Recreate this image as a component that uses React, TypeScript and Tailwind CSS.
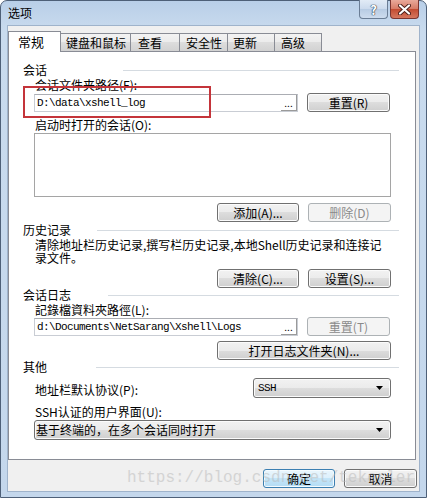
import type { ReactNode } from 'react';

const btnFace =
  'bg-[linear-gradient(#f2f2f2_0%,#ebebeb_50%,#dddddd_50%,#cfcfcf_100%)] border-[#707070] text-black shadow-[inset_0_0_0_1px_#fbfbfb]';
const btnDisabled = 'bg-[#f4f4f4] border-[#adb2b5] text-[#8a8a8a]';

function Button({
  children,
  className,
  disabled,
}: {
  children: ReactNode;
  className: string;
  disabled?: boolean;
}) {
  return (
    <div
      className={`flex h-[19px] items-center justify-center rounded-[3px] border text-[12px] leading-none ${
        disabled ? btnDisabled : btnFace
      } ${className}`}
    >
      {children}
    </div>
  );
}

function Arrow() {
  return (
    <svg width="7" height="4" viewBox="0 0 7 4">
      <path d="M0 0h7L3.5 4z" fill="#000" />
    </svg>
  );
}

function GroupHeader({ title, lineClass }: { title: string; lineClass: string }) {
  return (
    <div className="flex h-[14px] items-center">
      <span className="text-[12px] leading-none">{title}</span>
      <div className={`h-px flex-1 bg-[#d5dbe1] ${lineClass}`} />
    </div>
  );
}

function PathInput({ value }: { value: string }) {
  return (
    <div className="flex h-[18px] w-[264px] items-stretch border border-[#c9cdd4] border-t-[#abadb3] bg-white">
      <span className="flex flex-1 items-center pl-[2px] font-['Liberation_Mono',monospace] text-[11px] tracking-[-0.6px]">
        {value}
      </span>
      <span className="flex w-[16px] items-end justify-center border-r border-b border-[#9a9a9a] pb-[2px] text-[10px] leading-none">
        ...
      </span>
    </div>
  );
}

export default function App() {
  return (
    <div className="relative h-[498px] w-[427px] overflow-hidden bg-white font-['Noto_Sans_CJK_SC',sans-serif] text-black">
      <div className="flex h-full w-full flex-col rounded-t-[7px] border border-[#4e6078] bg-[linear-gradient(#b9cfe8,#c9dbee_30px,#c4d7ec)]">
        {/* Title bar */}
        <div className="flex h-[24px] items-start">
          <span className="mt-[6px] pl-[7px] text-[12px] leading-none">选项</span>
          <div className="-mt-px ml-auto mr-[7px] flex gap-[2px]">
            <div className="flex h-[19px] w-[29px] items-center justify-center rounded-b-[4px] border border-t-0 border-[#6a7d95] bg-[linear-gradient(#e2ebf6,#cbdaed_50%,#b7cbe3_50%,#cddcee)]">
              <span className="text-[13px] font-bold leading-none text-white [text-shadow:0_0_1px_#2d3b4d,0_0_1px_#2d3b4d,0_0_1px_#2d3b4d]">
                ?
              </span>
            </div>
            <div className="flex h-[19px] w-[29px] items-center justify-center rounded-b-[4px] border border-t-0 border-[#7b3530] bg-[linear-gradient(#e9a99a,#d77a65_50%,#c34a30_50%,#d5775f)]">
              <svg width="13" height="11" viewBox="0 0 13 11">
                <path d="M2 1.5l9 8M11 1.5l-9 8" stroke="#4a1d18" strokeWidth="4" strokeLinecap="round" />
                <path d="M2 1.5l9 8M11 1.5l-9 8" stroke="#fff" strokeWidth="2.2" strokeLinecap="round" />
              </svg>
            </div>
          </div>
        </div>

        {/* Client area */}
        <div className="mx-[6px] mb-[5px] flex flex-1 flex-col border border-[#9fb3cb] bg-[#f0f0f0]">
          {/* Tabs */}
          <div className="flex h-[25px] items-end text-[12px]">
            <div className="relative z-10 -mb-px flex h-[21px] w-[53px] items-center border border-b-0 border-[#898c95] bg-white pb-[2px] pl-[9px] text-[13px] leading-none">
              常规
            </div>
            <div className="-ml-px flex h-[18px] w-[71px] items-center border border-b-0 border-[#898c95] bg-[linear-gradient(#f3f3f3,#ebebeb_50%,#dddddd_50%,#d2d2d2)] pl-[5px] leading-none">
              键盘和鼠标
            </div>
            <div className="-ml-px flex h-[18px] w-[50px] items-center border border-b-0 border-[#898c95] bg-[linear-gradient(#f3f3f3,#ebebeb_50%,#dddddd_50%,#d2d2d2)] pl-[7px] leading-none">
              查看
            </div>
            <div className="-ml-px flex h-[18px] w-[49px] items-center border border-b-0 border-[#898c95] bg-[linear-gradient(#f3f3f3,#ebebeb_50%,#dddddd_50%,#d2d2d2)] pl-[6px] leading-none">
              安全性
            </div>
            <div className="-ml-px flex h-[18px] w-[48px] items-center border border-b-0 border-[#898c95] bg-[linear-gradient(#f3f3f3,#ebebeb_50%,#dddddd_50%,#d2d2d2)] pl-[5px] leading-none">
              更新
            </div>
            <div className="-ml-px flex h-[18px] w-[48px] items-center border border-b-0 border-[#898c95] bg-[linear-gradient(#f3f3f3,#ebebeb_50%,#dddddd_50%,#d2d2d2)] pl-[6px] leading-none">
              高级
            </div>
          </div>

          {/* Tab page */}
          <div className="flex h-[409px] w-[408px] flex-col border border-[#898c95] bg-white pt-[11px] pr-[16px] pl-[14px] text-[12px] leading-[12px]">
            <GroupHeader title="会话" lineClass="ml-[76px]" />
            <div className="mt-[2px] mr-[8px] ml-[11px] flex flex-col">
              <div className="h-[12px] pl-[1px]">会话文件夹路径(F):</div>
              <div className="mt-[2px] flex h-[19px] items-center gap-[9px]">
                <PathInput value={'D:\\data\\xshell_log'} />
                <Button className="w-[83px]">重置(R)</Button>
              </div>
              <div className="mt-[7px] h-[12px] pl-[1px]">启动时打开的会话(O):</div>
              <div className="mt-[2px] h-[64px] border border-[#a5a5a5] bg-white" />
              <div className="mt-[6px] flex justify-end gap-[9px]">
                <Button className="w-[82px]">添加(A)...</Button>
                <Button className="w-[83px]" disabled>
                  删除(D)
                </Button>
              </div>
            </div>

            <div className="mt-px">
              <GroupHeader title="历史记录" lineClass="ml-[26px]" />
            </div>
            <div className="mt-[1px] mr-[8px] ml-[11px] flex flex-col">
              <div className="pl-[1px] leading-[13px] whitespace-nowrap">
                <div>清除地址栏历史记录,撰写栏历史记录,本地Shell历史记录和连接记</div>
                <div>录文件。</div>
              </div>
              <div className="mt-[5px] flex justify-end gap-[9px]">
                <Button className="w-[82px]">清除(C)...</Button>
                <Button className="w-[83px]">设置(S)...</Button>
              </div>
            </div>

            <GroupHeader title="会话日志" lineClass="ml-[37px]" />
            <div className="mt-[2px] mr-[8px] ml-[11px] flex flex-col">
              <div className="h-[12px] pl-[1px]">記錄檔資料夾路徑(L):</div>
              <div className="mt-px flex h-[19px] items-center gap-[9px]">
                <PathInput value={'d:\\Documents\\NetSarang\\Xshell\\Logs'} />
                <Button className="w-[83px]" disabled>
                  重置(T)
                </Button>
              </div>
              <div className="mt-[5px] flex justify-end">
                <Button className="w-[174px]">打开日志文件夹(N)...</Button>
              </div>
            </div>

            <GroupHeader title="其他" lineClass="ml-[49px]" />
            <div className="mt-[4px] mr-[8px] ml-[11px] flex flex-col">
              <div className="flex h-[20px] items-center justify-between">
                <span className="pt-[3px] pl-[1px]">地址栏默认协议(P):</span>
                <div className={`flex h-[20px] w-[138px] items-center justify-between rounded-[3px] border pr-[7px] pl-[4px] ${btnFace}`}>
                  <span className="font-['Liberation_Mono',monospace] text-[11px] tracking-[-0.6px]">SSH</span>
                  <Arrow />
                </div>
              </div>
              <div className="mt-[8px] h-[12px] pl-[1px]">SSH认证的用户界面(U):</div>
              <div className={`mt-[2px] flex h-[20px] items-center justify-between rounded-[3px] border pr-[7px] pl-[1px] ${btnFace}`}>
                <span>基于终端的，在多个会话同时打开</span>
                <Arrow />
              </div>
            </div>
          </div>

          {/* Dialog buttons */}
          <div className="mt-[9px] flex justify-end gap-[9px] pr-[2px]">
            <div className="flex h-[19px] w-[72px] items-center justify-center rounded-[3px] border border-[#3c7fb1] bg-[linear-gradient(#eaf6fd,#dcf0fc_50%,#c4e5f8_50%,#b4dcf4)] text-[12px] leading-none shadow-[inset_0_0_0_1px_#f4fbff]">
              确定
            </div>
            <Button className="w-[73px]">取消</Button>
          </div>
        </div>
      </div>

      {/* Annotation box */}
      <div className="absolute top-[86px] left-[23px] h-[32px] w-[188px] border-2 border-[#c4343a]" />

      {/* Watermark */}
      <div className="pointer-events-none absolute top-[467px] left-[127px] font-['Liberation_Mono',monospace] text-[16px] leading-[22px] whitespace-nowrap text-[#b8b8b8] opacity-50">
        https://blog.csdn.net/tekerler
      </div>
    </div>
  );
}
